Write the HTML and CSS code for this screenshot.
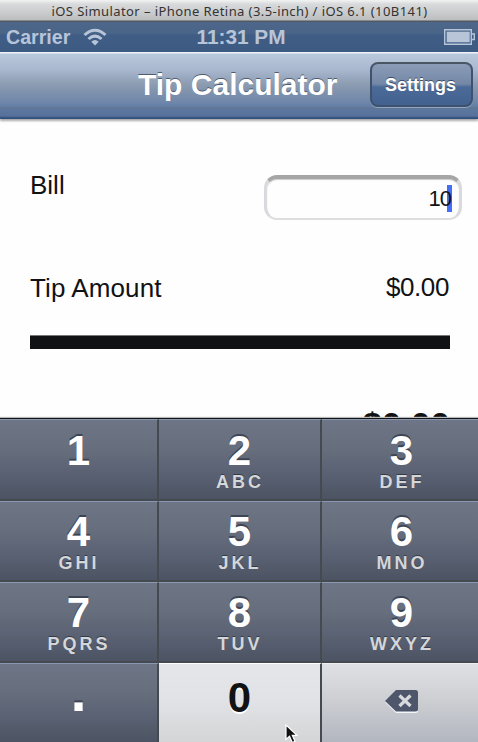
FILE: index.html
```html
<!DOCTYPE html>
<html lang="en">
<head>
<meta charset="utf-8">
<title>Tip Calculator</title>
<link rel="stylesheet" href="styles.css">
</head>
<body>
<div class="simulator">
  <div class="window-title"><span>iOS Simulator – iPhone Retina (3.5-inch) / iOS 6.1 (10B141)</span></div>
  <div class="status">
    <div class="carrier">Carrier
      <svg width="24" height="18" viewBox="0 0 24 18"><g fill="none" stroke="#b8c5d9" stroke-width="3"><path d="M1.5 7Q12-2.4 22.5 7"/><path d="M5.5 11Q12 5.2 18.5 11"/></g><path d="M8.3 13.7Q12 10.5 15.7 13.7L12 17.5Z" fill="#b8c5d9"/></svg>
    </div>
    <div class="clock">11:31 PM</div>
    <svg class="battery" width="32" height="16" viewBox="0 0 32 16"><path d="M.7.7H27.3V15.3H.7Z" fill="none" stroke="#b8c5d9" stroke-width="1.4"/><path d="M2.7 2.7H25.7V13.3H2.7Z" fill="#b8c5d9"/><path d="M28 5H30.3V10.5H28" fill="none" stroke="#b8c5d9" stroke-width="1.4"/></svg>
  </div>
  <div class="nav">
    <h1>Tip Calculator</h1>
    <button class="settings">Settings</button>
  </div>
  <main>
    <div class="row bill"><span class="label">Bill</span><div class="field"><span>10</span><i class="caret"></i></div></div>
    <div class="row tip"><span class="label">Tip Amount</span><span class="amount">$0.00</span></div>
    <div class="rule"></div>
    <div class="total">$0.00</div>
  </main>
  <div class="keypad">
    <div class="key"><b>1</b></div>
    <div class="key"><b>2</b><small>ABC</small></div>
    <div class="key"><b>3</b><small>DEF</small></div>
    <div class="key"><b>4</b><small>GHI</small></div>
    <div class="key"><b>5</b><small>JKL</small></div>
    <div class="key"><b>6</b><small>MNO</small></div>
    <div class="key"><b>7</b><small>PQRS</small></div>
    <div class="key"><b>8</b><small>TUV</small></div>
    <div class="key"><b>9</b><small>WXYZ</small></div>
    <div class="key point"><b>.</b></div>
    <div class="key zero"><b>0</b></div>
    <div class="key delete"><svg width="34" height="25" viewBox="0 0 34 25"><path d="M11 2H30.5Q33 2 33 4.5V21.5Q33 24 30.5 24H11L0 13Z" fill="#f4f5f7"/><path d="M11 1H30.5Q33 1 33 3.500V20Q33 22.500 30.500 22.500H11L0 12Z" fill="#4d566a"/><path d="M14.500 6.500L25.500 17M25.500 6.500L14.500 17" stroke="#d8d9dd" stroke-width="3.200"/></svg></div>
  </div>
  <svg class="pointer" width="13" height="20" viewBox="0 0 13 20"><path d="M1 1V15.500L4.500 12.300L7.300 18.500L10 17.300L7.300 11.300H12Z" fill="#111" stroke="#fff" stroke-width="1.200"/></svg>
</div>
</body>
</html>
```
FILE: styles.css
```css
* { box-sizing: border-box; }
body { margin: 0; background: #fff; font-family: "Liberation Sans", Arial, sans-serif; }
.simulator { position: relative; width: 478px; height: 742px; overflow: hidden; display: flex; flex-direction: column; background: #fefefe; }
.window-title { height: 22px; flex: none; background: linear-gradient(#f3f3f3, #d9dadb 4px, #bdbebf 20px, #515862 21px); text-align: center; font: 13px/23px "Noto Sans", sans-serif; letter-spacing: .42px; color: #333; white-space: nowrap; padding-left: 1px; }
.status { height: 30px; flex: none; display: grid; grid-template-columns: 165px 1fr 165px; align-items: center; background: linear-gradient(#4d6689, #496588 11px, #405d86 13px, #3d5a83); color: #b8c5d9; font-size: 19.6px; font-weight: bold; line-height: 30px; text-align: center; }
.carrier { display: flex; align-items: center; gap: 13px; padding-left: 6px; }
.clock { font-size: 20.8px; padding-left: 4px; }
.battery { justify-self: end; margin-right: 2px; }
.nav { height: 67px; flex: none; display: grid; grid-template-columns: 138px 200px 1fr; align-items: center; background: linear-gradient(#eef2f7 1px, #bac8dc 2px, #a8b7ce 18px, #8c9cb1 32px, #7087aa 50px, #627ea5 55px, #637388 56px, #5d789f 57px, #56719b 64px, #304f7b 66px, #304f7b 67px); box-shadow: 0 2px 2px #aaa; position: relative; }
.nav h1 { grid-column: 2; margin: -2px 0 0; font-size: 30px; line-height: 34px; color: #fff; text-shadow: 0 -1.5px 0 #505b70; white-space: nowrap; }
.settings { justify-self: start; margin: -2px 0 0 32px; width: 103px; height: 45px; border: 2px solid #3e526e; border-top-color: #4b5665; border-radius: 8px; padding: 0 2px 0 0; background: linear-gradient(#8b9cb8, #7488a6 20px, #4c6a98 23px, #42618f); box-shadow: 0 1px 0 #8fa6c4; color: #fff; font: bold 18px/40px "Liberation Sans", sans-serif; text-shadow: 0 -1px 0 #3b4d68; }
main { height: 299px; flex: none; padding: 50px 28px 0 30px; color: #111214; font-size: 26px; overflow: hidden; }
.row { display: flex; justify-content: space-between; }
.label { line-height: 32px; }
.bill { height: 103px; }
.field { width: 198px; height: 45px; margin: 6px -12px 0 0; border: 3px solid #d9dadd; border-top: 4px solid #a6a6a7; border-bottom: 2px solid #dddee0; border-radius: 13px; display: flex; justify-content: flex-end; align-items: center; padding-right: 7px; font-size: 22px; letter-spacing: -1px; box-shadow: inset 0 1px 1px #ccc; }
.field span { position: relative; z-index: 1; margin-right: -4px; }
.caret { width: 5px; height: 27px; background: #456ff5; }
.tip { height: 63px; }
.tip .label { letter-spacing: .1px; }
.amount { margin-right: 1px; line-height: 30px; letter-spacing: -.4px; }
.rule { height: 14px; background: #111214; border-top: 1px solid #777; }
.total { margin-top: 57px; text-align: right; font-weight: bold; font-size: 35px; line-height: 38px; }
.keypad { flex: 1; display: grid; grid-template: 82px repeat(2, 81px) 1fr / 159px 163px 1fr; border-top: 1px solid #111214; box-shadow: 0 -1px 1px #bbb; position: relative; }
.key { display: flex; flex-direction: column; align-items: center; padding-top: 8px; border-top: 1px solid #8998b0; border-bottom: 2px solid #454950; border-right: 2px solid #454950; background: linear-gradient(#6e7586, #666d7c 30px, #5c6475 48px, #4c5464); }
.key:nth-child(-n+3) { padding-top: 9px; }
.key b { font-size: 42px; line-height: 44px; color: #fff; text-shadow: 0 -2px 0 #3d4554; }
.key small { margin-top: -1px; font-size: 18px; line-height: 20px; font-weight: bold; letter-spacing: 3px; margin-right: -1px; color: #d4d6d9; text-shadow: 0 -1px 0 #343b48; }
.key:nth-child(3n) { border-right: 0; padding-left: 3px; }
.point, .zero, .delete { border-bottom: 0; }
.point b { font-size: 58px; line-height: 50px; margin-top: -6px; }
.zero { padding-top: 12px; background: linear-gradient(#e5e6e9, #e1e2e5 38px, #d4d5d7); border-top-color: #fff; }
.zero b { color: #111214; text-shadow: 0 2px 0 #fff; }
.key.delete { justify-content: center; padding: 0 0 3px 3px; background: linear-gradient(#dfe0e4, #d1d2d5 30px, #b2b6c0); border-top-color: #eee; }
.pointer { position: absolute; left: 285px; top: 724px; }
```
